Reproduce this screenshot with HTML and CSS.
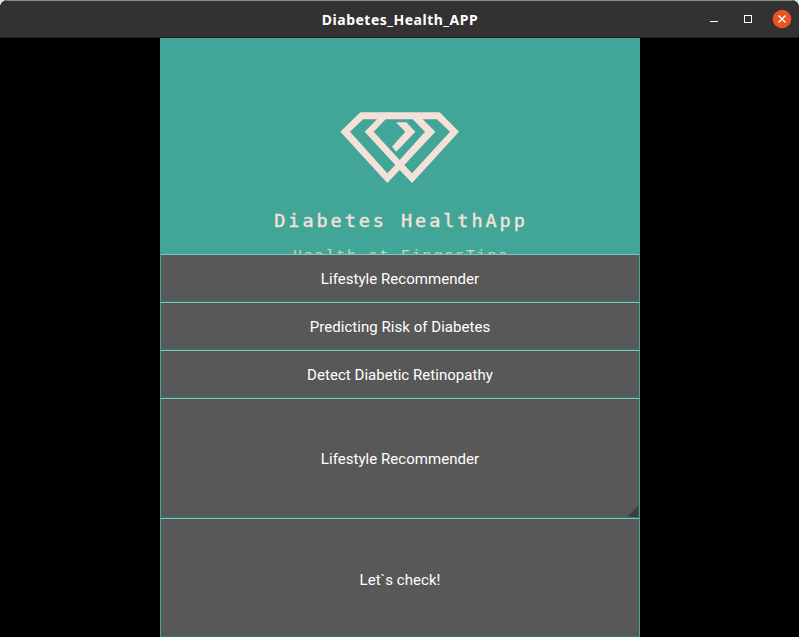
FILE: index.html
```html
<!DOCTYPE html>
<html lang="en">
<head>
<meta charset="utf-8">
<title>Diabetes_Health_APP</title>
<link rel="stylesheet" href="styles.css">
</head>
<body>
<div class="window">
  <header class="titlebar">
    <h1 class="title">Diabetes_Health_APP</h1>
    <div class="controls">
      <svg width="90" height="36" viewBox="0 0 90 36">
        <path d="M5 20.5h8" stroke="#fff"/>
        <rect x="39.5" y="14.5" width="7" height="7" fill="none" stroke="#fff"/>
        <circle cx="77" cy="18" r="9.3" fill="#e95420"/>
        <path d="M73.5 14.5l7 7m0-7l-7 7" stroke="#fff" stroke-width="1.4"/>
      </svg>
    </div>
  </header>
  <main class="app">
    <section class="hero">
      <svg class="logo" width="120" height="72" viewBox="30 35 360 216">
        <path fill="#f5e1da" fill-rule="evenodd" d="M91 36H329L387 94 246 248 209 209 172 248 31 94ZM99 57 60 94 172 219 196 194 104 94 141 57ZM167 57 131 94 209 179 285 94 248 57ZM278 57 316 94 223 194 246 219 360 94 321 57ZM198 66H229L256 94 199 154 186 139 226 94Z"/>
      </svg>
      <p class="brand">Diabetes HealthApp</p>
      <p class="tagline">Health at FingerTips</p>
    </section>
    <button class="item">Lifestyle Recommender</button>
    <button class="item">Predicting Risk of Diabetes</button>
    <button class="item">Detect Diabetic Retinopathy</button>
    <button class="item tall spinner">Lifestyle Recommender</button>
    <button class="item tall last">Let`s check!</button>
  </main>
</div>
</body>
</html>
```
FILE: styles.css
```css
* { box-sizing: border-box; }
body { margin: 0; background: #dfe3e2; overflow: hidden; }
.window { height: 637px; display: flex; flex-direction: column; align-items: center; background: #000; border-radius: 8px 8px 0 0; overflow: hidden; }
.titlebar { width: 100%; height: 38px; flex: none; display: grid; grid-template-columns: 90px 1fr 90px; grid-template-rows: 36px; align-items: start; padding-right: 4px; padding-left: 5px; background: #333132; border-top: 1px solid #8b8d8c; border-bottom: 1px solid #1e1d1d; }
.title { grid-column: 2; margin: 0; padding-top: 1px; text-align: center; color: #fff; font: bold 14px/36px "Noto Sans", sans-serif; letter-spacing: .5px; }
.controls { height: 36px; }
.controls svg { display: block; }
.app { width: 480px; height: 599px; display: flex; flex-direction: column; background: #41a698; }
.hero { height: 216px; flex: none; overflow: hidden; padding-top: 74px; display: flex; flex-direction: column; align-items: center; }
.logo { flex: none; }
.brand, .tagline { margin: 0; color: #f5e1da; white-space: pre; font-family: "DejaVu Sans Mono", monospace; }
.brand { margin-top: 25px; height: 24px; font-size: 18.5px; line-height: 24px; letter-spacing: 2.95px; padding-left: 3px; -webkit-text-stroke: 0.4px #f5e1da; }
.tagline { margin-top: 14px; height: 20px; font: 15px/20px "Liberation Mono", monospace; letter-spacing: 1.8px; padding-left: 3px; opacity: .75; }
.item { position: relative; width: 480px; height: 48px; flex: none; margin: 0; padding: 2px 0 0 1px; border: 1px solid #41a698; border-top-color: #82c4ba; border-bottom-color: #2e796f; border-radius: 1px; background: #585858; color: #fff; font: 15px/18px Roboto, sans-serif; letter-spacing: .04px; }
.tall { height: 120px; }
.last { height: 119px; padding-top: 4px; }
.spinner::after { content: ""; position: absolute; right: 0; bottom: 0; width: 11px; height: 12px; background: #3c3f41; clip-path: polygon(100% 0, 100% 100%, 0 100%); }
```
